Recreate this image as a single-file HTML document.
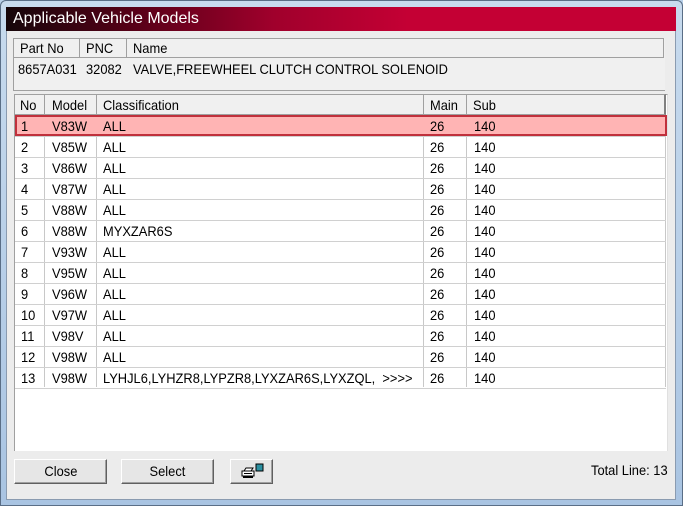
<!DOCTYPE html>
<html><head><style>
*{margin:0;padding:0;box-sizing:border-box}
body{width:683px;height:506px;overflow:hidden;background:#b9d1ea;font-family:"Liberation Sans",sans-serif;font-size:14px;color:#000;position:relative}
.frame{position:absolute;left:0;top:0;width:683px;height:506px;background:linear-gradient(#c8dbee,#a9c4e2);border:1px solid #5a6e86;border-radius:6px 6px 0 0}
.client{position:absolute;left:6px;top:7px;width:670px;height:493px;background:#ececec;border:1px solid #8a9bb0}
.title{position:absolute;left:6px;top:7px;width:670px;height:24px;background:linear-gradient(90deg,#16060a 0%,#5a0018 20%,#a0002c 40%,#c40034 60%,#c40034 100%);color:#fff;font-size:16px;line-height:24px;padding-left:7px}
.abs{position:absolute}
.hdr{background:#f0f0f0;border:1px solid #a0a0a0}
.cell{position:absolute;white-space:nowrap;transform:scaleX(0.92);transform-origin:left}
.vl{position:absolute;width:1px;background:#c8c8c8}
.hl{position:absolute;height:1px;background:#d0d0d0;left:15px;width:651px}
.btn{position:absolute;top:459px;height:25px;background:#e6e6e6;border:1px solid #fff;border-right-color:#606060;border-bottom-color:#606060;box-shadow:inset -1px -1px 0 #a0a0a0;text-align:center;line-height:23px;font-size:14px}
.btn span{display:inline-block;transform:scaleX(0.92)}
</style></head><body>
<div class="frame"></div>
<div class="client"></div>
<div class="title">Applicable Vehicle Models</div>

<div class="abs" style="left:13px;top:38px;width:652px;height:53px;border:1px solid #a0a0a0;border-top:none;border-right:none;background:#f0f0f0"></div>
<div class="abs hdr" style="left:13px;top:38px;width:651px;height:20px;background:#f0f0f0"></div>
<div class="vl" style="left:79px;top:39px;height:18px;background:#a0a0a0"></div>
<div class="vl" style="left:126px;top:39px;height:18px;background:#a0a0a0"></div>
<div class="cell" style="left:20px;top:40px">Part No</div>
<div class="cell" style="left:86px;top:40px">PNC</div>
<div class="cell" style="left:133px;top:40px">Name</div>
<div class="cell" style="left:18px;top:61px">8657A031</div>
<div class="cell" style="left:86px;top:61px">32082</div>
<div class="cell" style="left:133px;top:61px">VALVE,FREEWHEEL CLUTCH CONTROL SOLENOID</div>

<div class="abs" style="left:14px;top:94px;width:654px;height:357px;background:#fff;border:1px solid #a0a0a0;border-right-color:#e0e0e0;border-bottom:none"></div>
<div class="abs hdr" style="left:14px;top:94px;width:652px;height:21px;background:#f0f0f0;border-right:2px solid #808080"></div>
<div class="vl" style="left:44px;top:95px;height:19px;background:#a0a0a0"></div>
<div class="vl" style="left:96px;top:95px;height:19px;background:#a0a0a0"></div>
<div class="vl" style="left:423px;top:95px;height:19px;background:#a0a0a0"></div>
<div class="vl" style="left:466px;top:95px;height:19px;background:#a0a0a0"></div>
<div class="cell" style="left:20px;top:97px">No</div>
<div class="cell" style="left:52px;top:97px">Model</div>
<div class="cell" style="left:103px;top:97px">Classification</div>
<div class="cell" style="left:430px;top:97px">Main</div>
<div class="cell" style="left:473px;top:97px">Sub</div>

<div class="vl" style="left:44px;top:115px;height:272px"></div>
<div class="vl" style="left:96px;top:115px;height:272px"></div>
<div class="vl" style="left:423px;top:115px;height:272px"></div>
<div class="vl" style="left:466px;top:115px;height:272px"></div>
<div class="vl" style="left:665px;top:115px;height:272px"></div>

<div id="rows"></div>
<div class="abs" style="left:15px;top:115px;width:652px;height:21px;background:#ffb4b4;border:2px solid #c0303c"></div>

<script>
var d=[["1","V83W","ALL"],["2","V85W","ALL"],["3","V86W","ALL"],["4","V87W","ALL"],["5","V88W","ALL"],["6","V88W","MYXZAR6S"],["7","V93W","ALL"],["8","V95W","ALL"],["9","V96W","ALL"],["10","V97W","ALL"],["11","V98V","ALL"],["12","V98W","ALL"],["13","V98W","LYHJL6,LYHZR8,LYPZR8,LYXZAR6S,LYXZQL,&nbsp;&nbsp;&gt;&gt;&gt;&gt;"]];
var h="";
for(var i=0;i<d.length;i++){var y=115+i*21;
h+='<div class="hl" style="top:'+(y+21)+'px"></div>';
var t=y+3;
h+='<div class="cell" style="left:21px;top:'+t+'px;z-index:2">'+d[i][0]+'</div><div class="cell" style="left:52px;top:'+t+'px;z-index:2">'+d[i][1]+'</div><div class="cell" style="left:103px;top:'+t+'px;z-index:2">'+d[i][2]+'</div><div class="cell" style="left:430px;top:'+t+'px;z-index:2">26</div><div class="cell" style="left:474px;top:'+t+'px;z-index:2">140</div>';}
document.getElementById("rows").innerHTML=h;
</script>

<div class="btn" style="left:14px;width:93px"><span>Close</span></div>
<div class="btn" style="left:121px;width:93px"><span>Select</span></div>
<div class="btn" style="left:230px;width:43px">
<svg width="30" height="20" viewBox="0 0 30 20" style="margin-top:2px"><path d="M7 9 L9 6 H16 L14 9 Z" fill="#fff" stroke="#000"/><rect x="5" y="9" width="12" height="5" fill="#fff" stroke="#000"/><line x1="7" y1="11.5" x2="15" y2="11.5" stroke="#000"/><rect x="6" y="14" width="10" height="2" fill="#000"/><rect x="19" y="2" width="7" height="7" fill="#2a8fa0" stroke="#000"/></svg></div>
<div class="cell" style="left:591px;top:462px">Total Line: 13</div>
</body></html>
